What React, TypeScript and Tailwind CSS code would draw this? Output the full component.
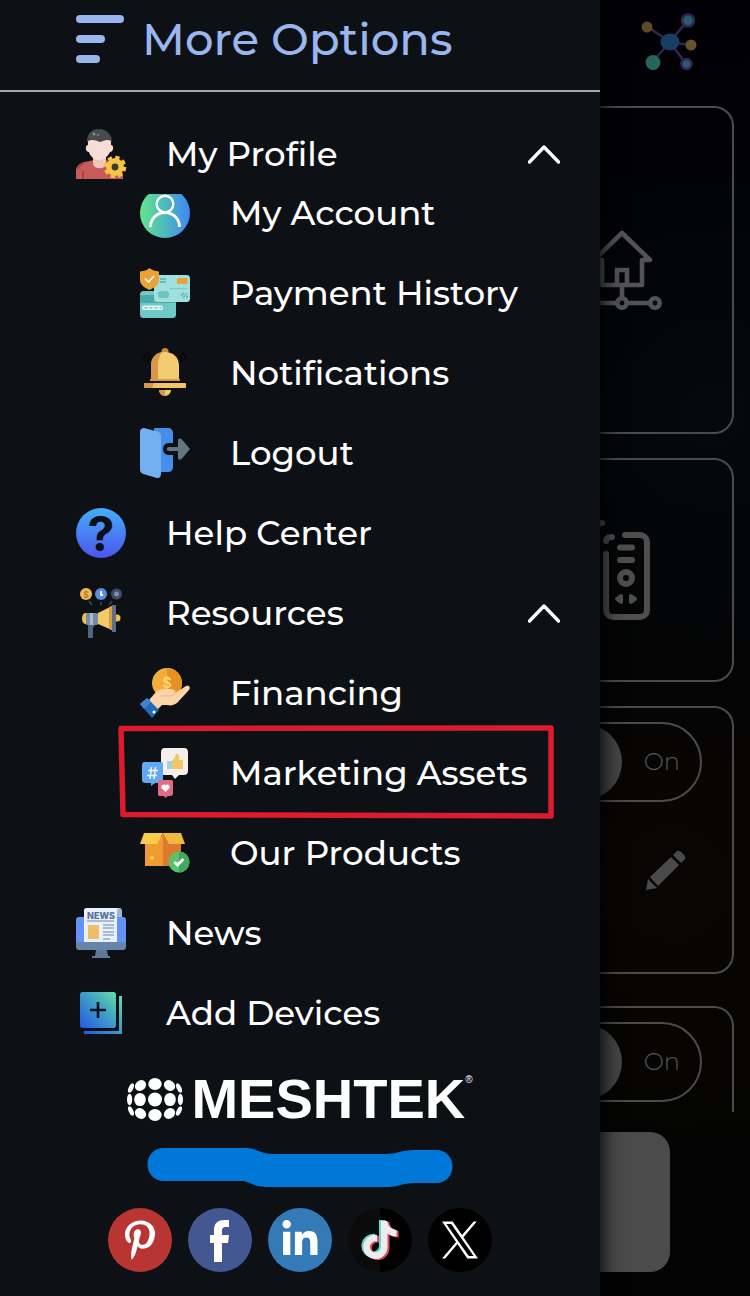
import React, { useState } from "react";
import { FaLinkedinIn, FaPinterestP, FaTiktok } from "react-icons/fa6";

interface MenuEntry {
  label: string;
  icon: React.ReactNode;
  highlighted?: boolean;
  children?: MenuEntry[];
}

function Icon({ children }: { children: React.ReactNode }) {
  return (
    <svg viewBox="0 0 50 50" className="size-[50px] shrink-0 overflow-visible" aria-hidden="true">
      {children}
    </svg>
  );
}

const ProfileIcon = () => (
  <Icon>
    <path d="M0 50v-8c0-5 4-8 9-9l9-2h12l9 3 8 10v6z" fill="#c95a5c" />
    <path d="M7 50v-8M2 40c1-3 3-5 6-6" stroke="#a94448" strokeWidth="2" fill="none" />
    <path d="M17 27h13v7c0 7-13 7-13 0z" fill="#efc6bb" />
    <path d="M12 8h23v8c3 0 3 7-1 7-2 4-6 8-11 8s-9-4-10-8c-4 0-4-7-1-7z" fill="#f8dcd5" />
    <path d="M11 13C11 4 16 0 23 0s13 5 13 13c-4-4-8-1-12 0-5-2-9-3-13 0z" fill="#4a4a4a" />
    <circle cx="18" cy="5" r="1.5" fill="#8a8a8a" />
    <circle cx="22" cy="6" r="1" fill="#8a8a8a" />
    <circle cx="39" cy="38" r="9" fill="#f6c544" />
    <circle cx="39" cy="38" r="9.5" fill="none" stroke="#f6c544" strokeWidth="3.6" strokeDasharray="4.2 3.26" />
    <circle cx="39" cy="38" r="3.4" fill="#3a3b35" />
  </Icon>
);

const AccountIcon = () => (
  <Icon>
    <defs>
      <linearGradient id="account" x1="0" x2="1" y1="0" y2="0">
        <stop offset="0" stopColor="#62e68b" />
        <stop offset="0.5" stopColor="#4db9bd" />
        <stop offset="1" stopColor="#3f86f6" />
      </linearGradient>
      <clipPath id="account-clip">
        <path d="M0 6h50v44H0z" />
      </clipPath>
    </defs>
    <g clipPath="url(#account-clip)">
      <circle cx="25" cy="25" r="25" fill="url(#account)" />
      <circle cx="25" cy="16" r="8.3" fill="none" stroke="#fff" strokeWidth="2.4" />
      <path d="M10.5 39c0-8 6-14.5 14.5-14.5S39.5 31 39.5 39" fill="none" stroke="#fff" strokeWidth="2.8" />
    </g>
  </Icon>
);

const PaymentIcon = () => (
  <Icon>
    <rect y="23" width="36" height="27" rx="3.5" fill="#6ecac8" />
    <path d="M0 27h36v8H0z" fill="#4ba9aa" />
    <rect x="2" y="37.5" width="21" height="4.5" rx="2" fill="#e4f7f5" />
    <path d="M4.5 39.8h17" stroke="#7fc5c5" strokeWidth="1.5" strokeDasharray="3 2" />
    <rect x="14" y="7" width="36" height="27" rx="3.5" fill="#9fe0de" />
    <rect x="37" y="10" width="10.5" height="6" rx="1.5" fill="#e9a03a" />
    <path d="M20 11h6m-6 3h6" stroke="#66bdb9" strokeWidth="2" />
    <rect x="18" y="23" width="11" height="7" rx="3" fill="#6fc3c0" />
    <path d="M30 20.5h17" stroke="#7ac9c7" strokeWidth="1.2" />
    <path d="M41 28l3-3m-1 5 4-5m-1 5 2-2" stroke="#57adb0" strokeWidth="1.2" />
    <path d="M9.5 0C12 2.200 15.500 3 19 3.500V12c0 5-5 8-9.500 10C5 20 0 17 0 12V3.500C4 3 7 2.200 9.500 0z" fill="#eda136" />
    <path d="m5 10.5 3.5 3.5 5.5-6" fill="none" stroke="#fff" strokeWidth="1.6" />
  </Icon>
);

const BellIcon = () => (
  <Icon>
    <circle cx="25" cy="3.5" r="3.5" fill="#c98c3c" />
    <path d="M19 42h12c0 3-3 6-6 6s-6-3-6-6z" fill="#f3cc71" />
    <path d="M19 42h6v6c-3 0-6-3-6-6z" fill="#d79648" />
    <path d="M11 33V18C11 9 17 4 25 4s14 5 14 14v15z" fill="#f3cc71" />
    <path d="M11 33V18C11 9 16 5 22 4c-3 4-4 9-4 14v15z" fill="#d79648" />
    <path d="M10 31h30v2H10z" fill="#d79648" />
    <rect x="4" y="35" width="42" height="5" rx="1" fill="#f3c568" />
    <path d="M4 35h10l-2 5H4z" fill="#d79648" />
    <path d="M4 13c0-4 2-7 4-9m0 10c0-3 1-5 2.5-7M46 13c0-4-2-7-4-9m0 10c0-3-1-5-2.5-7" stroke="#050607" strokeWidth="2" fill="none" />
  </Icon>
);

const LogoutIcon = () => (
  <Icon>
    <path d="M4 0h24c3 0 5 2 5 5v10h-4c-8 0-8 12 0 12h4v12c0 3-2 5-5 5H14V0z" fill="#488ee9" />
    <path d="M4 0 17 3.500c3 .8 4 2.500 4 5V46c0 3-2 4.500-5 3.700L3.500 46C1 45 0 44 0 41.500V4c0-3 2-4 4-4z" fill="#73b0f2" />
    <path d="M29 19h9v-6c0-3 2-3 4-1.5l8 9.5-8 9.5c-2 2-4 1.500-4-1v-6.500h-9c-3 0-3-4 0-4z" fill="#637782" />
  </Icon>
);

const HelpIcon = () => (
  <Icon>
    <defs>
      <linearGradient id="help" x1="0" x2="0" y1="0" y2="1">
        <stop offset="0" stopColor="#45aef8" />
        <stop offset="1" stopColor="#4c55ee" />
      </linearGradient>
    </defs>
    <circle cx="25" cy="25" r="25" fill="url(#help)" />
    <text x="25" y="43" textAnchor="middle" fontSize="48" fontWeight="700" fontFamily="Inter, sans-serif" fill="#0b1018">
      ?
    </text>
  </Icon>
);

const ResourcesIcon = () => (
  <Icon>
    <circle cx="10" cy="6" r="6" fill="#efbb5c" />
    <text x="10" y="9.5" textAnchor="middle" fontSize="9" fontWeight="700" fontFamily="Inter, sans-serif" fill="#c07e25">
      $
    </text>
    <circle cx="25" cy="6" r="6" fill="#5b8be2" />
    <path d="M25 3v4h2" stroke="#fff" strokeWidth="1.8" fill="none" />
    <circle cx="40.5" cy="6" r="5.5" fill="#3d4d66" />
    <circle cx="40.5" cy="6" r="2.5" fill="#7590b1" />
    <path d="m13 13 3 4m9-3v3m11-4-3 4" stroke="#344052" strokeWidth="1.8" />
    <circle cx="41" cy="30" r="3.5" fill="#efbf57" />
    <path d="M11 25v11H9c-4-1-4-10 0-11z" fill="#efbf57" />
    <rect x="10" y="25" width="12" height="12" rx="1.5" fill="#778ba4" />
    <path d="M14 25h3v12h-3z" fill="#aab8c8" />
    <path d="m22 25 14-7v24l-14-6z" fill="#f4ca67" />
    <path d="m33 19 3-1v24l-3-1z" fill="#d69c42" />
    <path d="M36 17h4v27h-4z" fill="#5e6f86" />
    <path d="M12 37h7l-2 3v10h-5z" fill="#4f6580" />
  </Icon>
);

const FinancingIcon = () => (
  <Icon>
    <circle cx="27" cy="15" r="15" fill="#f4ad3b" />
    <path d="M27 0a15 15 0 0 1 0 30z" fill="#e59225" />
    <text x="27" y="20" textAnchor="middle" fontSize="14" fontWeight="700" fontFamily="Inter, sans-serif" fill="#fbd66b">
      $
    </text>
    <path d="m9 32 7-8c3-3 7-3 12-3 6 0 8 1 7 4l11-7c3-1 5 1 3 4L37 35c-3 2-6 3-10 2h-5l-6 6z" fill="#fbd4a7" />
    <path d="M21 28h9c3 0 5-1 5-4" fill="none" stroke="#e7b586" strokeWidth="1" />
    <path d="m7 30 12 12-7 8L0 36z" fill="#2768b8" />
    <path d="m7 30 4 4-7 7-4-5z" fill="#3b88d2" />
    <circle cx="14" cy="44" r="1.5" fill="#fff" />
  </Icon>
);

const MarketingIcon = () => (
  <Icon>
    <path d="M25 0h19c3 0 4 2 4 4v19c0 3-2 4-4 4h-5l-4 4-3-4h-7c-3 0-4-1-4-4V4c0-2 1-4 4-4z" fill="#f5efec" />
    <path d="M27 13h5v8h-5z" fill="#9bd5e4" />
    <path d="M32 12c3-1 3-4 4-6 3-1 4 2 3 6h4v9H32z" fill="#f2c866" />
    <path d="M5 14h16c2 0 2 1 2 3v14c0 2-1 4-3 4h-5l-4 3v-3H6c-3 0-4-1-4-4V17c0-2 1-3 3-3z" fill="#62aaf0" />
    <path d="M8 22.500h10m-11 5h10M11.500 19l-1.500 12M15.500 19 14 31" stroke="#f2f7ff" strokeWidth="1.500" />
    <path d="M20 32h11c2 0 2 1 2 3v10c0 2-1 3-3 3h-2l-3 2-1-2h-4c-2 0-2-1-2-3V35c0-2 1-3 2-3z" fill="#e26b84" />
    <path d="m25.5 44-4-4c-1-3 3-5 4-2 1-3 5-1 4 2z" fill="#fff" />
  </Icon>
);

const ProductsIcon = () => (
  <Icon>
    <path d="M5 9h36v29H5z" fill="#f09b31" />
    <path d="M23 5h18v33H23z" fill="#df792d" />
    <path d="M4 5h19l-6 11H0z" fill="#f7cc4a" />
    <path d="M23 5h18l4 11H29z" fill="#eeb93c" />
    <path d="m23 5-5 11h5z" fill="#f09b31" />
    <circle cx="12" cy="30" r="2" fill="#ffd05a" />
    <circle cx="39" cy="34" r="10.5" fill="#5dc16c" />
    <path d="M39 23.500a10.500 10.500 0 0 1 0 21z" fill="#44a75e" />
    <path d="m34.5 34 3 3 6-6" fill="none" stroke="#fff" strokeWidth="2.8" />
  </Icon>
);

const NewsIcon = () => (
  <Icon>
    <rect y="9" width="50" height="31" rx="3" fill="#6792f5" />
    <path d="M0 34h50v5c0 2-1 3-3 3H3c-2 0-3-1-3-3z" fill="#6784aa" />
    <path d="M20 42h11l1 6h2v2H16v-2h3z" fill="#5c789d" />
    <path d="M10 0h33c2 0 3 2 3 4v5h-5v25H8V2c0-1 1-2 2-2z" fill="#e8f0fb" />
    <path d="M41 9V3c0-4 5-4 5 1v5z" fill="#9fb4cf" />
    <text x="25" y="10.5" textAnchor="middle" fontSize="9" fontWeight="800" fontFamily="Inter, sans-serif" fill="#547098">
      NEWS
    </text>
    <path d="M11 13h27M27 17h11M27 20h11M27 24h11M27 27h11M27 31h7" stroke="#91a9ca" strokeWidth="1.3" />
    <rect x="12" y="17" width="11" height="14" fill="#efbd68" />
  </Icon>
);

const DevicesIcon = () => (
  <Icon>
    <defs>
      <linearGradient id="devices" x1="0" x2="1" y1="1" y2="0">
        <stop offset="0" stopColor="#2457e6" />
        <stop offset="0.55" stopColor="#3f9fc6" />
        <stop offset="1" stopColor="#65dba8" />
      </linearGradient>
    </defs>
    <rect x="4" y="4" width="36" height="36" rx="2.5" fill="url(#devices)" />
    <path d="M43 8h3v38H8v-3h35z" fill="url(#devices)" />
    <path d="M22 14v16M14 22h16" stroke="#06131c" strokeWidth="2.6" />
  </Icon>
);

const menu: MenuEntry[] = [
  {
    label: "My Profile",
    icon: <ProfileIcon />,
    children: [
      { label: "My Account", icon: <AccountIcon /> },
      { label: "Payment History", icon: <PaymentIcon /> },
      { label: "Notifications", icon: <BellIcon /> },
      { label: "Logout", icon: <LogoutIcon /> },
    ],
  },
  { label: "Help Center", icon: <HelpIcon /> },
  {
    label: "Resources",
    icon: <ResourcesIcon />,
    children: [
      { label: "Financing", icon: <FinancingIcon /> },
      { label: "Marketing Assets", icon: <MarketingIcon />, highlighted: true },
      { label: "Our Products", icon: <ProductsIcon /> },
    ],
  },
  { label: "News", icon: <NewsIcon /> },
  { label: "Add Devices", icon: <DevicesIcon /> },
];

function MenuGroup({ entry, tucked }: { entry: MenuEntry; tucked: boolean }) {
  const [open, setOpen] = useState(true);

  return (
    <li>
      <button
        type="button"
        aria-expanded={open}
        onClick={() => setOpen(!open)}
        className="flex h-20 w-full cursor-pointer items-center gap-10 pl-[76px] pr-10 text-left"
      >
        {entry.icon}
        <span className="flex-1">{entry.label}</span>
        <svg viewBox="0 0 32 20" className={`h-5 w-8 ${open ? "" : "rotate-180"}`} fill="none" aria-hidden="true">
          <path d="M1.5 18 16 3l14.5 15" stroke="#fff" strokeWidth="3.4" strokeLinecap="round" strokeLinejoin="round" />
        </svg>
      </button>
      {open && (
        <ul className={tucked ? "-mt-[21px]" : ""}>
          {entry.children?.map((child) => (
            <li key={child.label} className="relative">
              <a href="#" className="flex h-20 items-center gap-10 pl-[140px]">
                {child.icon}
                <span>{child.label}</span>
              </a>
              {child.highlighted && (
                <svg
                  viewBox="0 0 440 96"
                  className="pointer-events-none absolute -top-2 left-[116px] h-24 w-[440px]"
                  fill="none"
                  aria-hidden="true"
                >
                  <path d="M5 3.500 435 3v88L7 89.500z" stroke="#dd1b2e" strokeWidth="5.5" strokeLinejoin="round" />
                </svg>
              )}
            </li>
          ))}
        </ul>
      )}
    </li>
  );
}

function MeshtekLogo() {
  return (
    <div className="flex items-center justify-center gap-2">
      <svg viewBox="0 0 56 43" className="h-[43px] w-14" fill="#fff" aria-hidden="true">
        <ellipse cx="28" cy="6" rx="6.7" ry="6" />
        <ellipse cx="28" cy="21.5" rx="7" ry="7" />
        <ellipse cx="28" cy="37" rx="6.7" ry="6" />
        <ellipse cx="13.5" cy="7.5" rx="6" ry="5" transform="rotate(-40 13.5 7.5)" />
        <ellipse cx="42.5" cy="7.5" rx="6" ry="5" transform="rotate(40 42.5 7.5)" />
        <ellipse cx="13" cy="21.5" rx="5.8" ry="6.6" />
        <ellipse cx="43" cy="21.5" rx="5.8" ry="6.6" />
        <ellipse cx="13.5" cy="35.5" rx="6" ry="5" transform="rotate(40 13.5 35.5)" />
        <ellipse cx="42.5" cy="35.5" rx="6" ry="5" transform="rotate(-40 42.5 35.5)" />
        <ellipse cx="4" cy="10" rx="2.3" ry="5" transform="rotate(25 4 10)" />
        <ellipse cx="52" cy="10" rx="2.3" ry="5" transform="rotate(-25 52 10)" />
        <ellipse cx="2.6" cy="21.5" rx="2.6" ry="5.8" />
        <ellipse cx="53.4" cy="21.5" rx="2.6" ry="5.8" />
        <ellipse cx="4" cy="33" rx="2.3" ry="5" transform="rotate(-25 4 33)" />
        <ellipse cx="52" cy="33" rx="2.3" ry="5" transform="rotate(25 52 33)" />
      </svg>
      <div className="flex items-start font-['Liberation_Sans',sans-serif] text-white">
        <span className="text-[56px] leading-[50px] font-bold">MESHTEK</span>
        <span className="text-[10px] leading-3 font-normal">®</span>
      </div>
    </div>
  );
}

function SocialLinks() {
  return (
    <div className="flex flex-wrap justify-center gap-4 text-white">
      <a href="#" aria-label="Pinterest" className="flex size-16 items-center justify-center rounded-full bg-[#b93534]">
        <FaPinterestP className="size-10" />
      </a>
      <a href="#" aria-label="Facebook" className="flex size-16 items-center justify-center rounded-full bg-[#435792]">
        <svg viewBox="0 0 64 64" className="size-16" fill="#fff" aria-hidden="true">
          <path d="M26 54V35h-4v-8h4v-5c0-7 4-10 11-10h4v7h-3c-3 0-4 1-4 4v4h7l-1 8h-6v19z" />
        </svg>
      </a>
      <a href="#" aria-label="LinkedIn" className="flex size-16 items-center justify-center rounded-full bg-[#337ab7]">
        <FaLinkedinIn className="size-10" />
      </a>
      <a
        href="#"
        aria-label="TikTok"
        className="grid size-16 place-items-center rounded-full bg-linear-to-r from-[#0b0b0b] from-50% to-black to-50%"
      >
        <FaTiktok className="col-start-1 row-start-1 mr-1 mb-0.5 size-[38px] text-[#69d5d3]" />
        <FaTiktok className="col-start-1 row-start-1 mt-0.5 ml-1 size-[38px] text-[#dc4a60]" />
        <FaTiktok className="col-start-1 row-start-1 size-[38px] text-[#ececec]" />
      </a>
      <a href="#" aria-label="X" className="flex size-16 items-center justify-center rounded-full bg-black">
        <svg viewBox="0 0 1200 1227" className="h-[38px] w-9" fill="#fff" aria-hidden="true">
          <path d="M714.163 519.284 1160.890 0H1055.030L667.137 450.887 357.328 0H0l468.492 681.821L0 1226.370h105.866l409.625-476.152 327.181 476.152H1200L714.137 519.284zM569.165 687.828l-47.468-67.894L144.011 79.694h162.604l304.797 435.991 47.468 67.894 396.200 566.721H892.476L569.165 687.854z" />
        </svg>
      </a>
    </div>
  );
}

function DeviceSwitch() {
  return (
    <label className="flex h-20 cursor-pointer items-center gap-[22px] rounded-full border-2 border-[#4b4b4b] pr-5">
      <input type="checkbox" defaultChecked className="size-[76px] appearance-none rounded-full bg-[#454545]" />
      <span className="text-2xl font-light text-[#555]">On</span>
    </label>
  );
}

function Dashboard() {
  return (
    <main className="col-start-1 row-start-1 flex flex-col bg-[radial-gradient(circle_at_95%_32%,#04090a,transparent_25%),radial-gradient(circle_at_90%_68%,#080604,transparent_30%),linear-gradient(#010105,#020206_35%,#040404_60%,#030303)] px-4 pb-6">
      <header className="flex h-[106px] items-start justify-end pt-3 pr-9">
        <svg viewBox="0 0 60 60" className="size-[60px]" aria-hidden="true">
          <path d="M32 30 10 15M32 30 50 8M32 30l20 3M32 30 14 50M32 30l16 22" stroke="#35244f" strokeWidth="2.5" />
          <ellipse cx="32" cy="30" rx="9.5" ry="8.5" fill="#173f65" />
          <circle cx="9" cy="15" r="5.5" fill="#5b4b2b" />
          <circle cx="50" cy="8.5" r="6" fill="#285b6b" stroke="#302759" strokeWidth="2.5" />
          <circle cx="53" cy="33" r="5.5" fill="#64552d" />
          <circle cx="15" cy="50.5" r="7.5" fill="#26645e" />
          <circle cx="48.5" cy="52" r="5" fill="#285b6b" stroke="#302759" strokeWidth="2.5" />
        </svg>
      </header>

      <div className="flex flex-col gap-6">
        <section className="flex h-[328px] items-center justify-end rounded-[20px] border-2 border-[#4b4b4b] pr-[70px]">
          <svg viewBox="0 0 80 80" className="size-20" fill="none" stroke="#535353" strokeWidth="4.6" aria-hidden="true">
            <path d="M40 3 68 30h-8v25H20V30h-8z" strokeLinejoin="round" />
            <path d="M35 54V40h10v14M40 55v13M10 73h25m10 0h24" />
            <circle cx="40" cy="73" r="4.7" />
            <circle cx="73" cy="73" r="4.7" />
            <circle cx="7" cy="73" r="4.7" />
          </svg>
        </section>

        <section className="flex h-56 items-center justify-end rounded-[20px] border-2 border-[#4b4b4b] pr-[82px]">
          <svg viewBox="0 0 100 100" className="size-[100px]" fill="none" stroke="#4e4e4e" strokeLinecap="round" aria-hidden="true">
            <path d="M75 15h15c4 0 7 3 7 7v68c0 4-3 7-7 7H63c-4 0-7-3-7-7V34" strokeWidth="6" />
            <path d="M56 21c0-3 2-4 6-4M46 7c2-3 4-4 6-4" strokeWidth="6" />
            <path d="M70 27.500h12M70 40h12" strokeWidth="6" />
            <circle cx="76" cy="58" r="6" strokeWidth="6" />
            <path d="m67 79 4-3v6zM85 79l-4-3v6z" fill="#4e4e4e" strokeWidth="4" strokeLinejoin="round" />
          </svg>
        </section>

        <section className="flex h-[268px] flex-col items-end rounded-[20px] border-2 border-[#4b4b4b] pt-[14px] pr-[30px]">
          <DeviceSwitch />
          <button type="button" aria-label="Edit" className="mt-12 mr-4 cursor-pointer">
            <svg viewBox="0 0 40 40" className="size-10" fill="#4a4a4a" aria-hidden="true">
              <path d="M0 40 2 29l9 9zM4 27 25 7l8 8-21 21zM27 5l4-4c2-2 10 5 8 8l-4 4z" />
            </svg>
          </button>
        </section>
      </div>

      <section className="mt-8 flex h-[106px] items-start justify-end rounded-t-[20px] border-2 border-b-0 border-[#4b4b4b] pt-[14px] pr-[30px]">
        <DeviceSwitch />
      </section>
      <div className="mx-16 mt-5 h-[140px] rounded-[20px] bg-[#4b4b4b]" />
    </main>
  );
}

export default function App() {
  return (
    <div className="grid min-h-screen grid-cols-1 overflow-hidden bg-black font-[Montserrat,Inter,sans-serif]">
      <Dashboard />

      {/* Side drawer, stacked over the dashboard in the same grid cell */}
      <aside className="z-10 col-start-1 row-start-1 w-4/5 bg-[#0d1115] font-medium text-white shadow-[0_0_20px_2px_#000]">
        <header className="flex h-[92px] items-center gap-[18px] border-b-2 border-[#a9a9b0] pb-3 pl-[76px]">
          <svg viewBox="0 0 48 48" className="size-12 shrink-0" fill="#99b6ef" aria-hidden="true">
            <rect width="48" height="8" rx="4" />
            <rect y="20" width="29" height="8" rx="4" />
            <rect y="40" width="24" height="8" rx="4" />
          </svg>
          <h1 className="text-[45px] leading-[48px] font-medium text-[#99b6ef]">More Options</h1>
        </header>

        <nav className="pt-[22px] text-[34px] leading-10">
          <ul>
            {menu.map((entry, index) =>
              entry.children ? (
                <MenuGroup key={entry.label} entry={entry} tucked={index === 0} />
              ) : (
                <li key={entry.label}>
                  <a href="#" className="flex h-20 items-center gap-10 pl-[76px]">
                    {entry.icon}
                    <span>{entry.label}</span>
                  </a>
                </li>
              )
            )}
          </ul>
        </nav>

        <footer className="pt-[21px] pb-6">
          <MeshtekLogo />
          {/* Painted-over contact line */}
          <svg viewBox="0 0 306 40" className="mx-auto mt-6 mb-5 h-10 w-[306px]" aria-hidden="true">
            <path
              d="M17 0h82c10 0 14 6 27 6h112c12 0 16-4 30-4h21c22 0 22 33 0 33h-21c-14 0-16 4-27 4H121c-16 0-17-6-27-6H17c-22 0-22-33 0-33z"
              fill="#0078d9"
            />
          </svg>
          <SocialLinks />
        </footer>
      </aside>
    </div>
  );
}
